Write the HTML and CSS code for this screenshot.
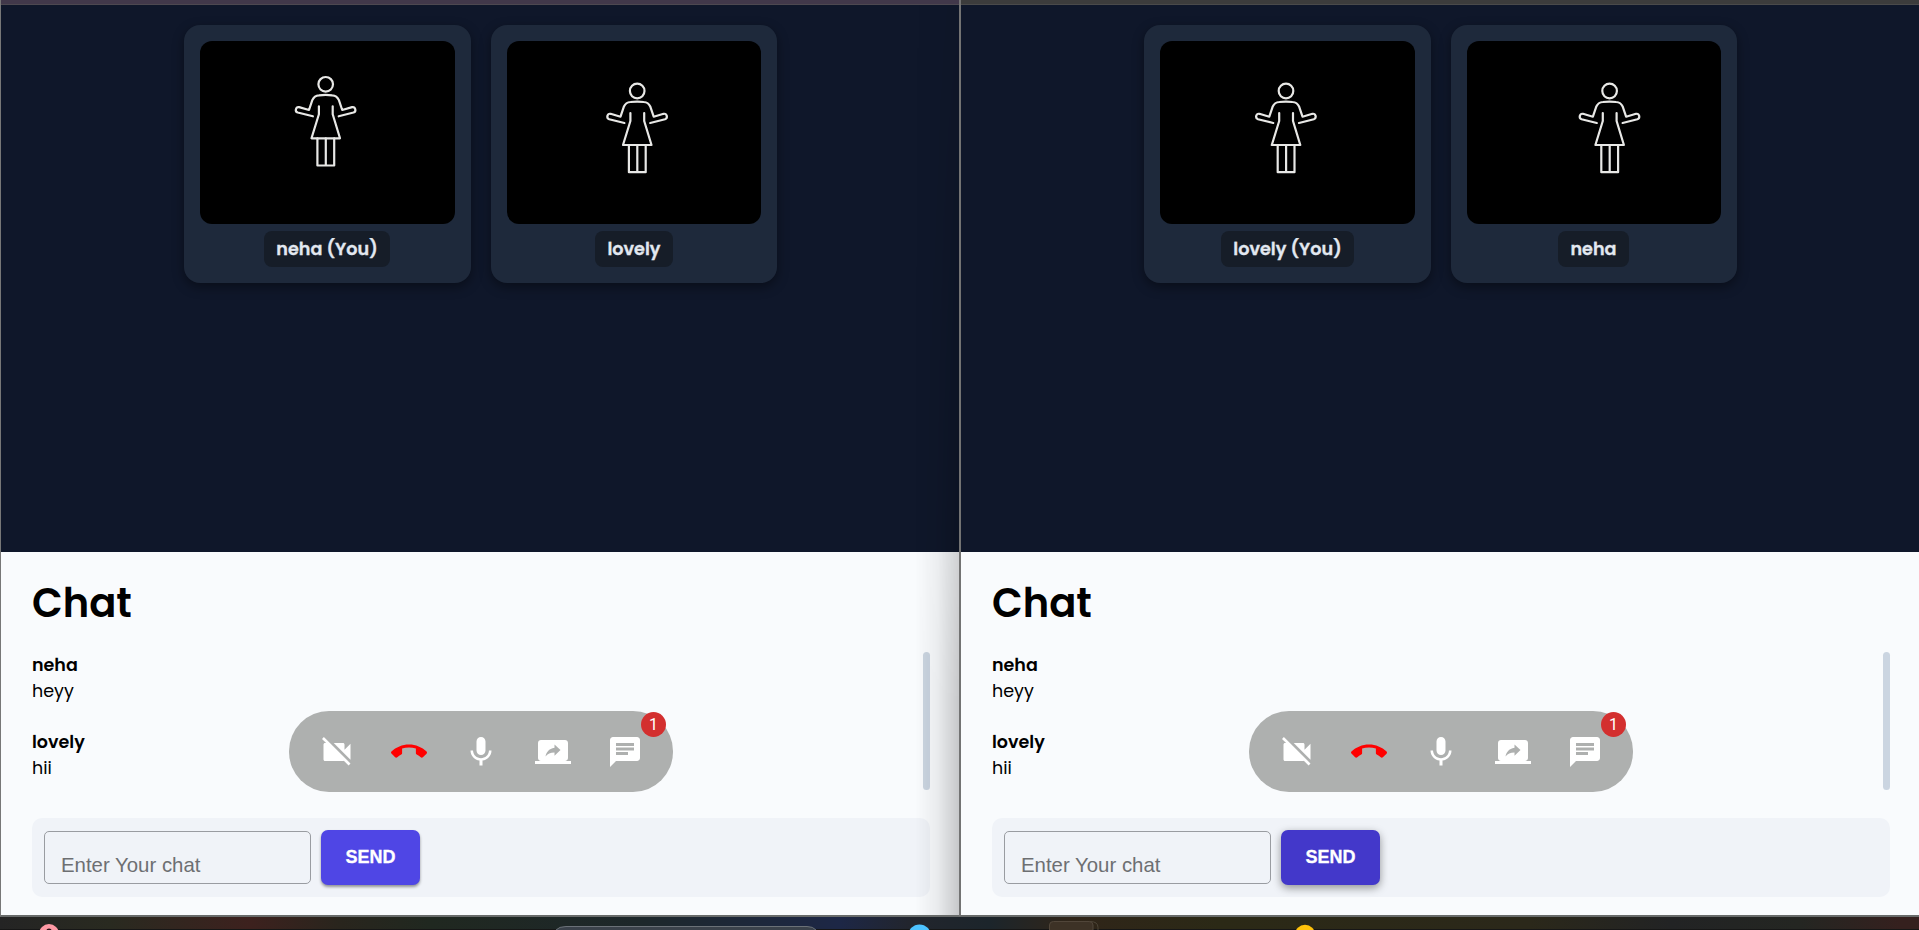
FILE: index.html
```
<!DOCTYPE html>
<html lang="en">
<head>
<meta charset="utf-8">
<title>Video meeting</title>
<link rel="stylesheet" href="styles.css">
</head>
<body>
<svg class="defs" aria-hidden="true">
  <defs>
    <g id="person" fill="none" stroke="#e8e8e6" stroke-width="2.200" stroke-linejoin="round" stroke-linecap="round">
      <circle cx="0" cy="0" r="7.300"/>
      <path d="M-12.800 32 -28 28.200A2.800 2.800 0 0 1-26.600 22.800L-16.700 25.700-13.400 15.800Q-11.400 11.200-6.700 11Q0 10.300 6.500 11Q11.200 11.200 13.200 15.800L16.500 25.700 26.400 22.800A2.800 2.800 0 0 1 27.800 28.200L13 32"/>
      <path d="M-6.800 22V30L-14.200 54H14.300L7 30V22"/>
      <path d="M-8.300 54V81.200H8.500V54M.1 54V81.200"/>
    </g>
    <symbol id="cam-off" viewBox="0 0 24 24"><path d="M21 6.500l-4 4V7c0-.55-.45-1-1-1H9.820L21 17.180V6.500zM3.270 2L2 3.270 4.730 6H4c-.55 0-1 .45-1 1v10c0 .55.45 1 1 1h12c.21 0 .39-.08.54-.18L19.730 21 21 19.730 3.270 2z"/></symbol>
    <symbol id="call-end" viewBox="0 0 24 24"><path d="M12 9c-1.600 0-3.150.25-4.600.72v3.100c0 .39-.23.74-.56.9-.98.49-1.870 1.120-2.660 1.850-.18.18-.43.28-.7.28-.28 0-.53-.11-.71-.29L.29 13.080c-.18-.17-.29-.42-.29-.7 0-.28.11-.53.29-.71C3.340 8.780 7.460 7 12 7s8.660 1.780 11.710 4.670c.18.18.29.43.29.71 0 .28-.11.53-.29.71l-2.480 2.480c-.18.18-.43.29-.71.29-.27 0-.52-.11-.7-.28-.79-.74-1.690-1.360-2.670-1.850-.33-.16-.56-.5-.56-.9v-3.100C15.150 9.250 13.600 9 12 9z"/></symbol>
    <symbol id="mic" viewBox="0 0 24 24"><path d="M12 14c1.660 0 2.990-1.340 2.990-3L15 5c0-1.660-1.340-3-3-3S9 3.340 9 5v6c0 1.660 1.340 3 3 3zm5.300-3c0 3-2.540 5.100-5.300 5.100S6.700 14 6.700 11H5c0 3.410 2.720 6.230 6 6.720V21h2v-3.280c3.280-.48 6-3.300 6-6.720h-1.700z"/></symbol>
    <symbol id="screen-share" viewBox="0 0 24 24"><path d="M20 18c1.100 0 1.990-.9 1.990-2L22 6c0-1.110-.9-2-2-2H4c-1.110 0-2 .89-2 2v10c0 1.100.89 2 2 2H0v2h24v-2h-4zm-7-3.530v-2.190c-2.780 0-4.610.85-6 2.720.56-2.670 2.110-5.330 6-5.870V7l4 3.730-4 3.740z"/></symbol>
    <symbol id="chat" viewBox="0 0 24 24"><path d="M20 2H4c-1.100 0-1.990.9-1.990 2L2 22l4-4h14c1.100 0 2-.9 2-2V4c0-1.100-.9-2-2-2zM6 9h12v2H6V9zm8 5H6v-2h8v2zm4-6H6V6h12v2z"/></symbol>
  </defs>
</svg>

<div class="screen">
  <main class="windows">
    <section class="window window-left">
      <div class="titlebar"></div>
      <div class="stage">
        <article class="card">
          <svg class="video"><use href="#person" x="125.700" y="43.300"/></svg>
          <span class="name name-neha-you">neha (You)</span>
        </article>
        <article class="card card-second">
          <svg class="video"><use href="#person" x="130.200" y="50"/></svg>
          <span class="name name-lovely">lovely</span>
        </article>
      </div>
      <div class="chat">
        <h1>Chat</h1>
        <div class="messages">
          <div class="list">
            <div class="message"><b>neha</b><p>heyy</p></div>
            <div class="message"><b>lovely</b><p>hii</p></div>
          </div>
          <div class="scrollbar"></div>
        </div>
        <form class="composer">
          <div class="field">Enter Your chat</div>
          <button class="send" type="button">SEND</button>
        </form>
      </div>
      <nav class="controls">
        <svg><use href="#cam-off"/></svg>
        <svg class="hangup"><use href="#call-end"/></svg>
        <svg><use href="#mic"/></svg>
        <svg><use href="#screen-share"/></svg>
        <svg><use href="#chat"/></svg>
        <span class="badge">1</span>
      </nav>
      <div class="edge-shadow"></div>
    </section>

    <section class="window window-right">
      <div class="titlebar"></div>
      <div class="stage">
        <article class="card">
          <svg class="video"><use href="#person" x="126" y="50"/></svg>
          <span class="name name-lovely-you">lovely (You)</span>
        </article>
        <article class="card card-second">
          <svg class="video"><use href="#person" x="142.600" y="50"/></svg>
          <span class="name name-neha">neha</span>
        </article>
      </div>
      <div class="chat">
        <h1>Chat</h1>
        <div class="messages">
          <div class="list">
            <div class="message"><b>neha</b><p>heyy</p></div>
            <div class="message"><b>lovely</b><p>hii</p></div>
          </div>
          <div class="scrollbar"></div>
        </div>
        <form class="composer">
          <div class="field">Enter Your chat</div>
          <button class="send send-hover" type="button">SEND</button>
        </form>
      </div>
      <nav class="controls">
        <svg><use href="#cam-off"/></svg>
        <svg class="hangup"><use href="#call-end"/></svg>
        <svg><use href="#mic"/></svg>
        <svg><use href="#screen-share"/></svg>
        <svg><use href="#chat"/></svg>
        <span class="badge">1</span>
      </nav>
    </section>
  </main>

  <footer class="taskbar">
    <svg width="1919" height="13" viewBox="0 0 1919 13">
      <circle cx="49" cy="17" r="10" fill="#ff9aa5"/>
      <path d="M46.500 13a2.500 1.600 0 0 1 5 0z" fill="#2a1518"/>
      <path d="M556 13Q559 9.500 566 9.500H807Q813 9.500 816 13" fill="#3b424b" stroke="#6b7178"/>
      <circle cx="919.500" cy="19" r="11.500" fill="#4cc2ff"/>
      <path d="M1090 4.500q8 0 8 6v3" fill="none" stroke="#4c4437"/>
      <path d="M1049.500 14V8q0-3.500 4-3.500H1089q4 0 4 3.500v6" fill="#3d3226" stroke="#51463a"/>
      <circle cx="1305" cy="18" r="10.200" fill="#ffc20a"/>
    </svg>
  </footer>
</div>
</body>
</html>
```
FILE: styles.css
```
* { box-sizing: border-box; }
body { margin: 0; overflow: hidden; font-family: Poppins, Inter, "Open Sans", sans-serif; color: #000; }
.defs { display: block; width: 0; height: 0; position: absolute; }
.screen { width: 1919px; height: 930px; display: flex; flex-direction: column; background: #222; }

.windows { display: flex; height: 917px; }
.window { position: relative; display: flex; flex-direction: column; height: 917px; border-bottom: 2px solid #686b6a; background: #0f172a; }
.window-left { width: 959px; border-left: 1px solid #777; }
.window-right { width: 960px; border-left: 2px solid #737373; }
.titlebar { height: 5px; background: #41384a; border-bottom: 1px solid #4d4850; flex: none; }
.window-right .titlebar { background: #3c3c3c; border-bottom-color: #4a4a4a; }

.stage { height: 547px; flex: none; display: flex; gap: 20px; align-items: flex-start; padding: 20px 0 0 183px; }
.card { width: 287px; height: 258px; padding: 16px; display: flex; flex-direction: column; align-items: center; gap: 7px; background: #1e293b; border-radius: 16px; box-shadow: 0 4px 12px rgba(0, 0, 0, .4); }
.card-second { width: 286px; }
.video { display: block; width: 100%; height: 183px; flex: none; background: #000; border-radius: 12px; }
.name { height: 36px; line-height: 37px; border-radius: 8px; background: #161d28; color: #e2e8f0; font-size: 17.600px; font-weight: 600; -webkit-text-stroke: .3px #e2e8f0; text-align: center; white-space: nowrap; }
.name-neha-you { width: 126px; margin-right: 1px; }
.name-lovely { width: 78px; }
.name-lovely-you { width: 133px; }
.name-neha { width: 71px; margin-right: 1px; }

.chat { height: 363px; flex: none; padding: 24px 29px 0 31px; background: #f9fbfd; display: flex; flex-direction: column; }
h1 { margin: 0 0 16px; height: 60px; line-height: 54px; font-size: 40px; font-weight: 600; }
.messages { height: 138px; display: flex; justify-content: space-between; }
.message { height: 77px; font-size: 17.500px; line-height: 26px; }
.message b { display: block; font-weight: 600; }
.message p { margin: 0; }
.scrollbar { width: 7px; height: 138px; border-radius: 4px; background: #cbd5e1; }
.composer { margin-top: 28px; height: 79px; padding: 0 12px; display: flex; align-items: center; gap: 10px; border-radius: 10px; background: #f0f3f8; font-family: "Liberation Sans", Arial, sans-serif; }
.field { width: 267px; height: 53px; padding: 21px 0 0 16px; border: 1px solid #999ca1; border-radius: 5px; font-size: 20.400px; line-height: 24px; color: #6d6f72; }
.send { width: 99px; height: 55px; padding: 0; border: 0; border-radius: 7px; background: #4f46e5; color: #fff; font: bold 18px/55px "Liberation Sans", sans-serif; -webkit-text-stroke: .3px #fff; box-shadow: 0 2px 3px rgba(0, 0, 0, .4); }
.send-hover { background: #4338ca; box-shadow: 0 3px 8px rgba(0, 0, 0, .4); }

.controls { position: absolute; left: 288px; top: 711px; width: 384px; height: 81px; padding: 0 30px; display: flex; align-items: center; justify-content: space-between; border-radius: 40px; background: #aeb0af; }
.controls svg { width: 36px; height: 36px; fill: #fff; }
.controls .hangup { fill: #f00; }
.badge { position: absolute; left: 352px; top: 1px; width: 25px; height: 25px; border-radius: 50%; background: #d32f2f; color: #fff; font: 400 16px/25px Roboto, sans-serif; text-align: center; }

.edge-shadow { position: absolute; right: 0; top: 5px; width: 44px; height: 910px; background: linear-gradient(to right, rgba(0, 0, 0, 0), rgba(0, 0, 0, .06) 50%, rgba(0, 0, 0, .2)); -webkit-mask-image: linear-gradient(rgba(0, 0, 0, .2), #000 700px); mask-image: linear-gradient(rgba(0, 0, 0, .2), #000 700px); }

.taskbar { height: 13px; background: linear-gradient(to right, #242424 0, #292a20 110px, #3d211e 250px, #29251d 340px, #202820 430px, #1d272a 640px, #1d2746 840px, #22252d 910px, #1c252b 990px, #302519 1070px, #2b2916 1220px, #2b281a 1530px, #222324 1670px, #242622 1800px, #35201e 1900px); border-bottom: 1px solid #161616; }
.taskbar svg { display: block; }
```
